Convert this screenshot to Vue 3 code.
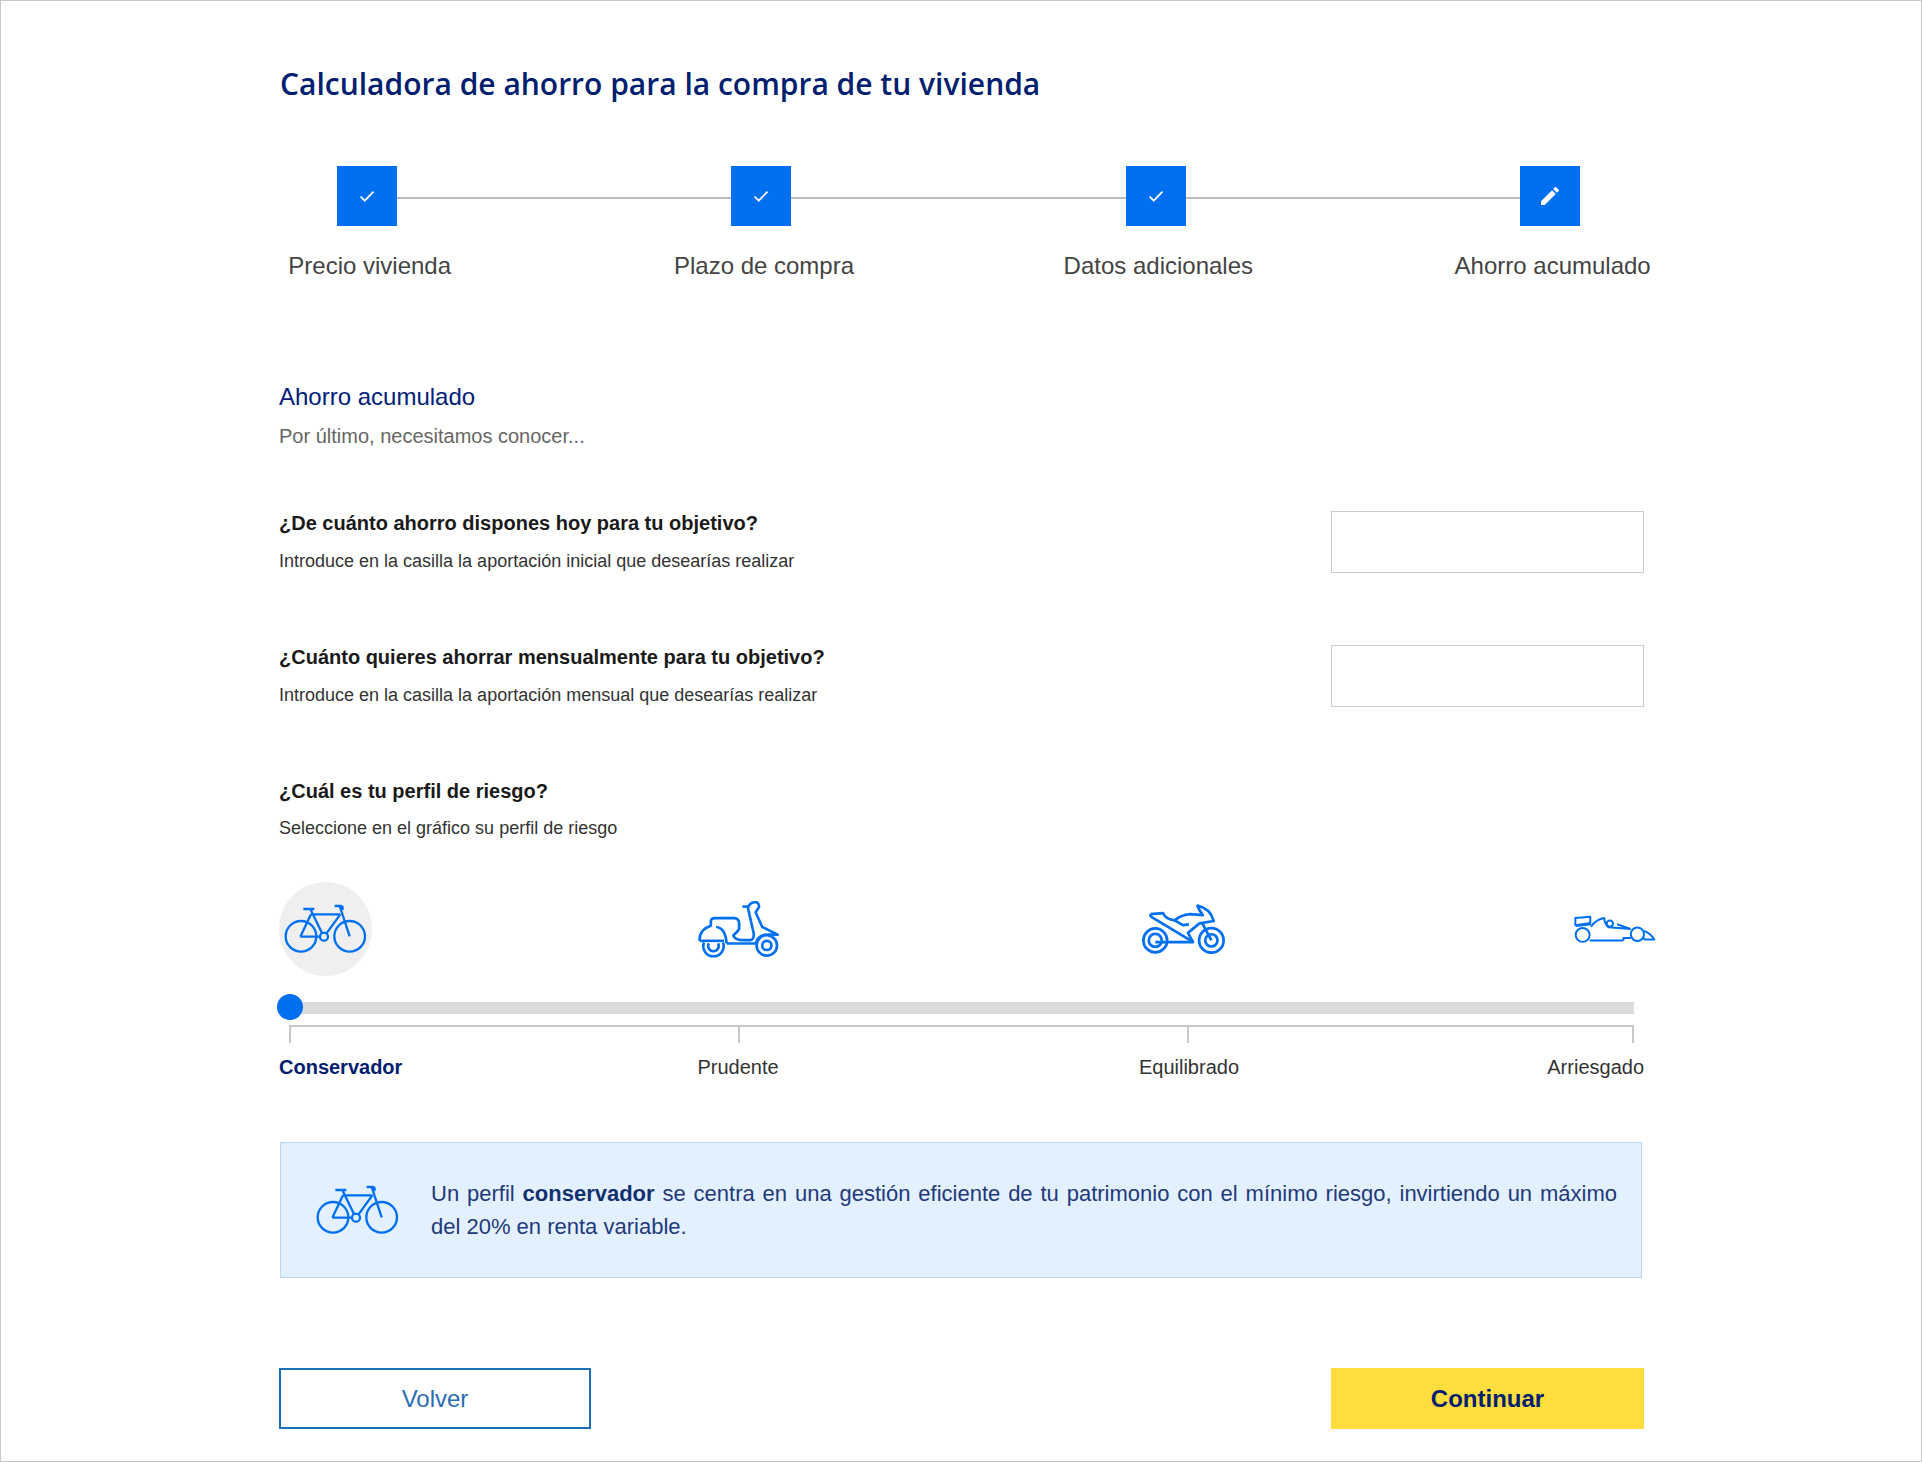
<script setup>
const steps = [
  { label: 'Precio vivienda', icon: 'check' },
  { label: 'Plazo de compra', icon: 'check' },
  { label: 'Datos adicionales', icon: 'check' },
  { label: 'Ahorro acumulado', icon: 'edit' }
];

const questions = [
  {
    title: '¿De cuánto ahorro dispones hoy para tu objetivo?',
    help: 'Introduce en la casilla la aportación inicial que desearías realizar'
  },
  {
    title: '¿Cuánto quieres ahorrar mensualmente para tu objetivo?',
    help: 'Introduce en la casilla la aportación mensual que desearías realizar'
  }
];
</script>

<template>
  <div class="page">
    <div class="content">
      <h1 class="title">Calculadora de ahorro para la compra de tu vivienda</h1>

      <div class="steps">
        <div class="step" v-for="step in steps" :key="step.label">
          <div class="step-box">
            <svg v-if="step.icon === 'check'" width="18" height="18" viewBox="0 0 18 18">
              <path d="M2.5 9.5l4.2 4.2L15.5 4.6" fill="none" stroke="#fff" stroke-width="1.7" />
            </svg>
            <svg v-else width="24" height="24" viewBox="0 0 24 24">
              <path fill="#fff" d="M3 17.25V21h3.75L17.81 9.94l-3.75-3.75L3 17.25zM20.71 7.04a1 1 0 0 0 0-1.41l-2.34-2.34a1 1 0 0 0-1.41 0l-1.83 1.83 3.75 3.75 1.83-1.83z" />
            </svg>
          </div>
          <div class="step-label">{{ step.label }}</div>
        </div>
      </div>

      <h2 class="section-title">Ahorro acumulado</h2>
      <p class="section-sub">Por último, necesitamos conocer...</p>

      <div class="question" v-for="q in questions" :key="q.title">
        <div>
          <div class="q-title">{{ q.title }}</div>
          <div class="q-help">{{ q.help }}</div>
        </div>
        <input class="q-input" type="text" />
      </div>

      <div class="q-title">¿Cuál es tu perfil de riesgo?</div>
      <div class="q-help risk-help">Seleccione en el gráfico su perfil de riesgo</div>

      <div class="vehicles">
        <div class="bike-circle">
          <svg class="bike" viewBox="66 97 255 156">
            <g fill="none" stroke="#0070f0" stroke-width="7">
              <circle cx="120" cy="197" r="46" />
              <circle cx="266" cy="197" r="46" />
              <circle cx="189" cy="198" r="12" />
              <path d="M148 115l36 74M150 131h88M238 131l-42 58M118 198l32-67M118 198h60M236 106l30 91M127 115h33M221 106h20q6 2 3 12" />
            </g>
          </svg>
        </div>
        <svg class="vehicle scooter" viewBox="50 55 252 180">
          <g fill="none" stroke="#0070f0" stroke-width="8" stroke-linejoin="round">
            <path d="M71 187A31 31 0 1 0 129 187" />
            <path d="M86 190A16 16 0 1 0 114 190" />
            <circle cx="262" cy="196" r="31" />
            <circle cx="262" cy="196" r="14" />
            <path d="M58 182C56 158 72 142 92 136V124Q92 113 105 113H165Q178 115 178 130V146Q172 156 160 166Q166 180 186 180H212Q224 178 222 158L205 84Q204 76 214 68Q220 64 232 65Q240 70 238 80L228 95L248 140L295 163H272Q236 160 228 190H140" />
            <path d="M58 182H132" />
            <path d="M108 140Q136 142 140 190" />
            <path d="M188 78H208" />
          </g>
        </svg>
        <svg class="vehicle moto" viewBox="36 40 250 150">
          <g fill="none" stroke="#0070f0" stroke-width="8" stroke-linejoin="round">
            <circle cx="78" cy="147" r="35" />
            <circle cx="78" cy="147" r="19" />
            <circle cx="243" cy="147" r="36" />
            <circle cx="243" cy="147" r="18" />
            <path d="M64 70l37-3q8 18 34 21q20-16 45-18l38 3q-12-16-16-28q38 8 48 45l-42 7-34 28 15 27H78" />
            <path d="M64 70q-2 6 6 10l120 72M135 88l24 14 18-2M217 98l26 49" />
          </g>
        </svg>
        <svg class="vehicle car" viewBox="38 70 250 92">
          <g fill="none" stroke="#0070f0" stroke-width="6" stroke-linejoin="round">
            <path d="M45 82l45-4v19l-45 7zM47 106l45-5" />
            <circle cx="67" cy="133" r="21" />
            <circle cx="232" cy="131" r="20" />
            <circle cx="149" cy="99" r="9.5" />
            <path d="M92 108q16-22 40-26q2 22 14 28l66 5M171 101l40 14" />
            <path d="M88 150h98q6-2 4-8h23M252 121q20 8 31 26h-27q-4 0-7-6" />
          </g>
        </svg>
      </div>

      <div class="slider">
        <div class="track"></div>
        <div class="thumb"></div>
      </div>
      <div class="ruler">
        <span class="seg"></span>
        <span class="seg"></span>
        <span class="seg"></span>
      </div>
      <div class="risk-labels">
        <span class="active">Conservador</span>
        <span class="center">Prudente</span>
        <span class="center">Equilibrado</span>
        <span class="right">Arriesgado</span>
      </div>

      <div class="info">
        <svg class="info-bike" viewBox="66 97 255 156">
          <g fill="none" stroke="#0070f0" stroke-width="7">
            <circle cx="120" cy="197" r="46" />
            <circle cx="266" cy="197" r="46" />
            <circle cx="189" cy="198" r="12" />
            <path d="M148 115l36 74M150 131h88M238 131l-42 58M118 198l32-67M118 198h60M236 106l30 91M127 115h33M221 106h20q6 2 3 12" />
          </g>
        </svg>
        <p class="info-text">Un perfil <b>conservador</b> se centra en una gestión eficiente de tu patrimonio con el mínimo riesgo, invirtiendo un máximo del 20% en renta variable.</p>
      </div>

      <div class="actions">
        <button class="btn btn-back">Volver</button>
        <button class="btn btn-next">Continuar</button>
      </div>
    </div>
  </div>
</template>

<style scoped>
.page {
  box-sizing: border-box;
  width: 1922px;
  height: 1462px;
  border: 1px solid #c8c8c8;
  background: #fff;
  overflow: hidden;
  font-family: "Liberation Sans", Arial, sans-serif;
}

.content {
  width: 1365px;
  margin-left: 278px;
  padding-top: 63px;
}

.title {
  margin: 0 0 0 1px;
  font-family: "Open Sans", sans-serif;
  font-size: 30px;
  line-height: 40px;
  font-weight: 600;
  color: #00206f;
}

.steps {
  display: flex;
  margin: 62px 0 0 -109px;
  width: 1578px;
}

.step {
  position: relative;
  flex: 0 0 394.33px;
  display: flex;
  flex-direction: column;
  align-items: center;
}

/* linea entre pasos */
.step:not(:last-child)::after {
  content: "";
  position: absolute;
  left: 50%;
  top: 31px;
  width: 100%;
  height: 2px;
  background: #bcbcbc;
}

.step-box {
  position: relative;
  z-index: 1;
  width: 60px;
  height: 60px;
  background: #0070f0;
  display: flex;
  align-items: center;
  justify-content: center;
}

.step-label {
  margin-top: 25px;
  padding-left: 5px;
  font-size: 24px;
  line-height: 30px;
  color: #444;
}

.section-title {
  margin: 101px 0 0;
  font-size: 24px;
  line-height: 30px;
  font-weight: 400;
  color: #00207a;
}

.section-sub {
  margin: 10px 0 60px;
  font-size: 20px;
  line-height: 28px;
  color: #666;
}

.question {
  display: flex;
  justify-content: space-between;
  align-items: flex-start;
  height: 63px;
  margin-bottom: 71px;
}

.q-title {
  font-size: 20px;
  line-height: 26px;
  font-weight: 700;
  color: #1a1a1a;
}

.q-help {
  margin-top: 13px;
  font-size: 18px;
  line-height: 24px;
  color: #333;
}

.risk-help {
  margin-top: 12px;
}

.q-input {
  box-sizing: border-box;
  width: 313px;
  height: 62px;
  margin-top: 1px;
  border: 1px solid #ccc;
  background: #fff;
}

.vehicles {
  display: flex;
  align-items: center;
  height: 94px;
  margin-top: 42px;
  width: 1400px;
}

.bike-circle {
  flex: none;
  width: 93px;
  height: 94px;
  border-radius: 50%;
  background: #efefef;
  display: flex;
  align-items: center;
  justify-content: center;
}

.bike {
  width: 85px;
  height: 52px;
}

.vehicle {
  flex: none;
  width: 83px;
}

.scooter {
  margin-left: 325px;
}

.moto {
  width: 85px;
  margin-left: 361px;
}

.car {
  margin-left: 347px;
}

.slider {
  position: relative;
  box-sizing: border-box;
  height: 26px;
  margin-top: 18px;
  padding-top: 8px;
}

.track {
  height: 12px;
  margin-left: 10px;
  width: 1345px;
  background: #dcdcdc;
}

.thumb {
  position: absolute;
  left: -2px;
  top: 0;
  width: 26px;
  height: 26px;
  border-radius: 50%;
  background: #0070f0;
}

.ruler {
  display: grid;
  grid-template-columns: 449px 449px 447px;
  margin: 5px 0 0 10px;
}

.seg {
  box-sizing: border-box;
  height: 18px;
  border-top: 2px solid #c8c8c8;
  border-left: 2px solid #c8c8c8;
}

.seg:last-child {
  border-right: 2px solid #c8c8c8;
}

.risk-labels {
  display: grid;
  grid-template-columns: 239px 440px 462px 1fr;
  margin-top: 12px;
  font-size: 20px;
  line-height: 24px;
  color: #333;
}

.risk-labels .active {
  font-weight: 700;
  color: #00206f;
}

.risk-labels .center {
  text-align: center;
}

.risk-labels .right {
  text-align: right;
}

.info {
  box-sizing: border-box;
  display: flex;
  align-items: center;
  width: 1362px;
  height: 136px;
  margin: 63px 0 0 1px;
  padding: 0 24px 0 34px;
  background: #e3f0ff;
  border: 1px solid #b9d6f2;
}

.info-bike {
  flex: none;
  width: 85px;
  height: 52px;
  margin-right: 31px;
}

.info-text {
  margin: 0;
  font-size: 22px;
  line-height: 33px;
  text-align: justify;
  color: #1f3a7a;
}

.info-text b {
  color: #12306f;
}

.actions {
  display: flex;
  justify-content: space-between;
  margin-top: 90px;
}

.btn {
  box-sizing: border-box;
  width: 313px;
  height: 61px;
  font-family: inherit;
  font-size: 24px;
}

.btn-back {
  width: 312px;
  background: #fff;
  border: 2px solid #1a6fb5;
  color: #2a6db5;
}

.btn-next {
  background: #ffdd3c;
  border: none;
  font-weight: 700;
  color: #00206f;
}
</style>
